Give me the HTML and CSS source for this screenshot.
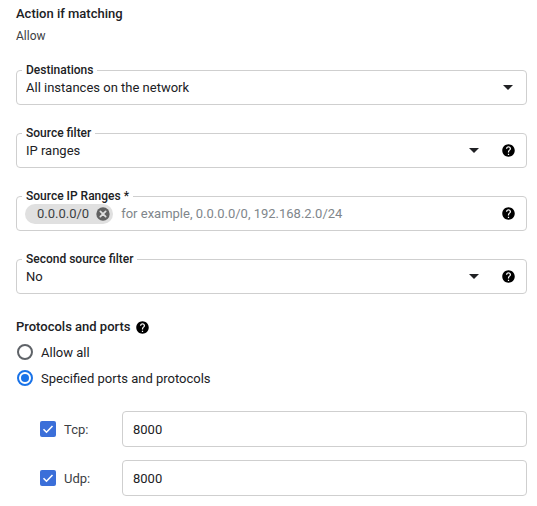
FILE: index.html
```html
<!DOCTYPE html>
<html>
<head>
<meta charset="utf-8">
<link rel="stylesheet" href="styles.css">
</head>
<body>
<div class="page">
  <div class="section-title">Action if matching</div>
  <div class="section-value">Allow</div>

  <div class="field first">
    <span class="field-label">Destinations</span>
    <span class="field-value">All instances on the network</span>
    <span class="arrow solo"></span>
  </div>

  <div class="field">
    <span class="field-label">Source filter</span>
    <span class="field-value">IP ranges</span>
    <span class="arrow"></span>
    <svg class="help" viewBox="0 0 24 24"><path d="M12 2C6.48 2 2 6.48 2 12s4.48 10 10 10 10-4.48 10-10S17.52 2 12 2zm1 17h-2v-2h2v2zm2.07-7.75l-.9.92C13.45 12.9 13 13.5 13 15h-2v-.5c0-1.1.45-2.1 1.17-2.83l1.24-1.26c.37-.36.59-.86.59-1.41 0-1.1-.9-2-2-2s-2 .9-2 2H8c0-2.21 1.79-4 4-4s4 1.79 4 4c0 .88-.36 1.68-.93 2.25z"/></svg>
  </div>

  <div class="field">
    <span class="field-label">Source IP Ranges *</span>
    <span class="chip">0.0.0.0/0
      <svg class="chip-x" viewBox="0 0 24 24"><circle cx="12" cy="12" r="10"/><path d="M8 8l8 8M16 8l-8 8" stroke="#e0e0e0" stroke-width="2.6" stroke-linecap="round"/></svg>
    </span>
    <span class="placeholder">for example, 0.0.0.0/0, 192.168.2.0/24</span>
    <svg class="help" viewBox="0 0 24 24"><path d="M12 2C6.48 2 2 6.48 2 12s4.48 10 10 10 10-4.48 10-10S17.52 2 12 2zm1 17h-2v-2h2v2zm2.07-7.75l-.9.92C13.45 12.9 13 13.5 13 15h-2v-.5c0-1.1.45-2.1 1.17-2.83l1.24-1.26c.37-.36.59-.86.59-1.41 0-1.1-.9-2-2-2s-2 .9-2 2H8c0-2.21 1.79-4 4-4s4 1.79 4 4c0 .88-.36 1.68-.93 2.25z"/></svg>
  </div>

  <div class="field">
    <span class="field-label">Second source filter</span>
    <span class="field-value">No</span>
    <span class="arrow"></span>
    <svg class="help" viewBox="0 0 24 24"><path d="M12 2C6.48 2 2 6.48 2 12s4.48 10 10 10 10-4.48 10-10S17.52 2 12 2zm1 17h-2v-2h2v2zm2.07-7.75l-.9.92C13.45 12.9 13 13.5 13 15h-2v-.5c0-1.1.45-2.1 1.17-2.83l1.24-1.26c.37-.36.59-.86.59-1.41 0-1.1-.9-2-2-2s-2 .9-2 2H8c0-2.21 1.79-4 4-4s4 1.79 4 4c0 .88-.36 1.68-.93 2.25z"/></svg>
  </div>

  <div class="proto-title">Protocols and ports
    <svg class="help small" viewBox="0 0 24 24"><path d="M12 2C6.48 2 2 6.48 2 12s4.48 10 10 10 10-4.48 10-10S17.52 2 12 2zm1 17h-2v-2h2v2zm2.07-7.75l-.9.92C13.45 12.9 13 13.5 13 15h-2v-.5c0-1.1.45-2.1 1.17-2.83l1.24-1.26c.37-.36.59-.86.59-1.41 0-1.1-.9-2-2-2s-2 .9-2 2H8c0-2.21 1.79-4 4-4s4 1.79 4 4c0 .88-.36 1.68-.93 2.25z"/></svg>
  </div>

  <div class="radios">
    <div class="radio-row"><span class="radio"></span><span>Allow all</span></div>
    <div class="radio-row"><span class="radio checked"></span><span>Specified ports and protocols</span></div>
  </div>

  <div class="ports">
    <div class="port-row">
      <span class="checkbox"><svg viewBox="0 0 16 16"><path d="M3.5 8.2l3 3 6-6.2" fill="none" stroke="#fff" stroke-width="1.6"/></svg></span>
      <span class="port-label">Tcp:</span>
      <div class="port-input">8000</div>
    </div>
    <div class="port-row">
      <span class="checkbox"><svg viewBox="0 0 16 16"><path d="M3.5 8.2l3 3 6-6.2" fill="none" stroke="#fff" stroke-width="1.6"/></svg></span>
      <span class="port-label">Udp:</span>
      <div class="port-input">8000</div>
    </div>
  </div>
</div>
</body>
</html>
```

FILE: styles.css
```css
* { box-sizing: border-box; }
html, body { margin: 0; padding: 0; background: #fff; }
body {
  font-family: Roboto, "Liberation Sans", Arial, sans-serif;
  color: #202124;
  font-size: 13px;
}
.page {
  width: 527px;
  padding: 4px 0 0 16px;
}
.section-title {
  font-size: 13px;
  font-weight: 500;
  line-height: 20px;
}
.section-value {
  font-size: 12px;
  line-height: 16px;
  margin-top: 4px;
  color: #3c4043;
}
.field {
  position: relative;
  height: 35px;
  border: 1px solid #cfcfcf;
  border-radius: 4px;
  display: flex;
  align-items: center;
  padding: 0 9px;
  margin-top: 28px;
}
.field.first { margin-top: 26px; }
.field-label {
  position: absolute;
  top: -8px;
  left: 5px;
  padding: 0 4px;
  background: #fff;
  font-size: 12px;
  font-weight: 500;
  line-height: 14px;
  color: #202124;
}
.field-value {
  flex: 1;
  font-size: 13px;
  line-height: 16px;
}
.arrow {
  width: 0;
  height: 0;
  border-left: 5px solid transparent;
  border-right: 5px solid transparent;
  border-top: 5px solid #202124;
}
.arrow.solo { margin-right: 4px; }
.help {
  width: 15px;
  height: 15px;
  fill: #000;
  margin-left: 22px;
  margin-right: 1px;
}
.field .placeholder + .help { margin-left: 0; }
.chip {
  display: inline-flex;
  align-items: center;
  height: 20px;
  padding: 0 2px 0 12px;
  margin-left: -1px;
  background: #e0e0e0;
  border-radius: 10px;
  font-size: 13px;
  color: #3c4043;
}
.chip-x {
  width: 16px;
  height: 16px;
  fill: #616161;
  margin-left: 6px;
}
.placeholder {
  flex: 1;
  margin-left: 8px;
  color: #80868b;
  font-size: 13px;
}
.proto-title {
  margin-top: 23px;
  font-size: 13px;
  font-weight: 500;
  line-height: 20px;
  display: flex;
  align-items: center;
}
.help.small {
  margin-left: 5px;
  margin-right: 0;
}
.radios {
  margin-top: 2px;
}
.radio-row {
  display: flex;
  align-items: center;
  height: 26px;
  font-size: 13px;
}
.radio {
  width: 16px;
  height: 16px;
  border: 2px solid #5f6368;
  border-radius: 50%;
  margin: 0 8px 0 1px;
  position: relative;
}
.radio.checked {
  border-color: #1a73e8;
}
.radio.checked::after {
  content: "";
  position: absolute;
  left: 2px;
  top: 2px;
  width: 8px;
  height: 8px;
  border-radius: 50%;
  background: #1a73e8;
}
.ports {
  margin-top: 20px;
  display: flex;
  flex-direction: column;
  gap: 13px;
}
.port-row {
  display: flex;
  align-items: center;
  padding-left: 24px;
}
.checkbox {
  width: 16px;
  height: 16px;
  border-radius: 2px;
  background: #3b6fd9;
  display: flex;
}
.checkbox svg { width: 16px; height: 16px; }
.port-label {
  width: 58px;
  margin-left: 8px;
  font-size: 13px;
  color: #3c4043;
}
.port-input {
  flex: 1;
  height: 36px;
  border: 1px solid #cfcfcf;
  border-radius: 4px;
  display: flex;
  align-items: center;
  padding-left: 10px;
  font-size: 13px;
  color: #202124;
}
```
